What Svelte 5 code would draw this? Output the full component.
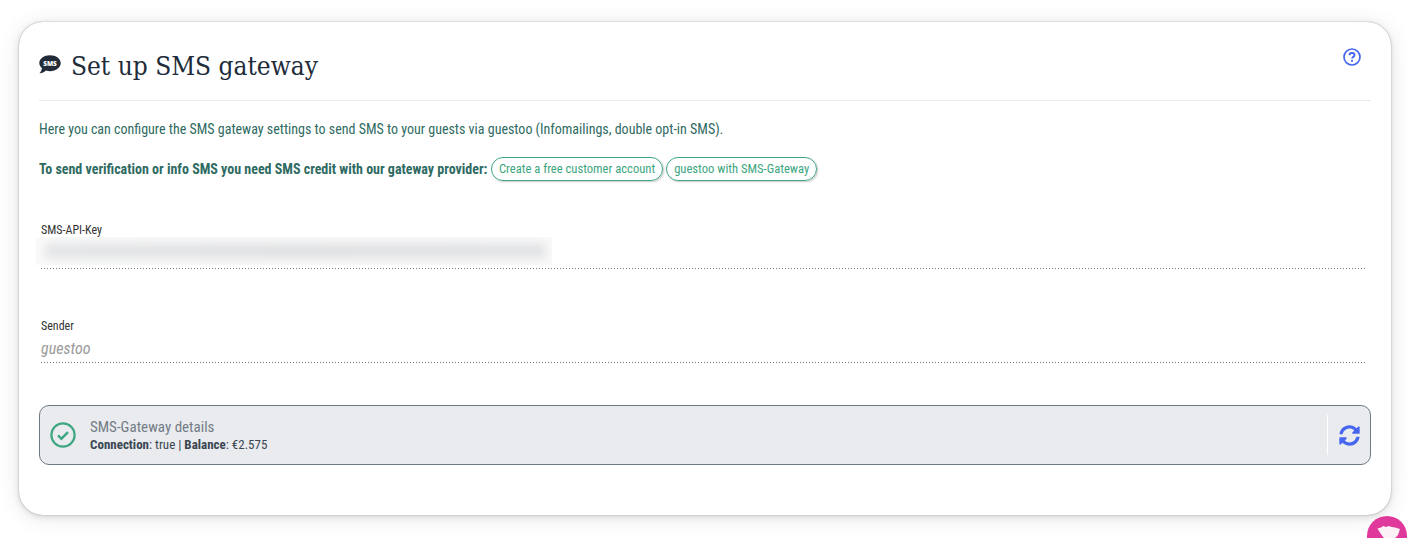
<script>
  const title = 'Set up SMS gateway';
</script>

<div class="page">
  <section class="card">
    <header class="head">
      <div class="title">
        <svg class="sms" viewBox="0 0 22 19" width="22" height="19" aria-hidden="true">
          <path d="M11 0.2C5 0.2 0.300 3.700 0.300 8.100c0 2 1 3.800 2.700 5.200C2.800 15 1.700 17 0.400 18.400c2.700-.1 5.100-1.300 6.600-2.800 1.200.4 2.600.6 4 .6 6 0 10.700-3.600 10.700-8.100S17 .2 11 .2z" fill="#212b3a"/>
          <text x="11" y="10.500" text-anchor="middle" class="smstext">SMS</text>
        </svg>
        <h1>{title}</h1>
      </div>
      <svg class="help" viewBox="0 0 18 18" width="18" height="18" aria-hidden="true">
        <circle cx="9" cy="9" r="8" fill="none" stroke="#4766f0" stroke-width="1.700"/>
        <path d="M6.500 7.200c0-1.400 1.100-2.200 2.500-2.200s2.500.8 2.500 2.100c0 1.900-2.400 1.700-2.400 3.500" fill="none" stroke="#4766f0" stroke-width="1.900"/>
        <rect x="8.100" y="11.900" width="1.900" height="1.900" fill="#4766f0"/>
      </svg>
    </header>

    <p class="intro">Here you can configure the SMS gateway settings to send SMS to your guests via guestoo (Infomailings, double opt-in SMS).</p>
    <p class="credit">
      <strong>To send verification or info SMS you need SMS credit with our gateway provider:</strong>
      <span class="pills">
        <a class="pill" href="#a">Create a free customer account</a>
        <a class="pill" href="#b">guestoo with SMS-Gateway</a>
      </span>
    </p>

    <div class="field first">
      <div class="label">SMS-API-Key</div>
      <div class="value"><div class="secret"><div class="smear"></div></div></div>
    </div>
    <div class="field second">
      <div class="label">Sender</div>
      <div class="value placeholder">guestoo</div>
    </div>

    <div class="status">
      <svg class="ok" viewBox="0 0 26 26" width="26" height="26" aria-hidden="true">
        <circle cx="13" cy="13" r="11.600" fill="none" stroke="#3ea680" stroke-width="2.200"/>
        <path d="M8 13.400l3.400 3.300 6.600-6.600" fill="none" stroke="#3ea680" stroke-width="2.400"/>
      </svg>
      <div class="info">
        <div class="info-title">SMS-Gateway details</div>
        <div class="info-line"><b>Connection</b>: true | <b>Balance</b>: €2.575</div>
      </div>
      <div class="refresh">
        <svg viewBox="0 0 512 512" width="21" height="21" aria-hidden="true">
          <path fill="#4766f0" d="M370.7 133.3C339.5 104 298.9 88 255.800 88c-77.500.1-144.300 53.200-162.800 126.900-1.300 5.400-6.100 9.200-11.700 9.200H24.100c-7.500 0-13.200-6.800-11.800-14.200C33.900 94.900 134.800 8 256 8c66.400 0 126.800 26.100 171.300 68.700L463 41C478.100 25.900 504 36.600 504 57.900V192c0 13.300-10.700 24-24 24H345.900c-21.400 0-32.100-25.900-17-41l41.800-41.700zM32 296h134.100c21.400 0 32.100 25.900 17 41l-41.800 41.800c31.300 29.300 71.800 45.300 114.900 45.200 77.400-.1 144.300-53.100 162.800-126.800 1.300-5.400 6.100-9.200 11.700-9.200h57.300c7.500 0 13.200 6.800 11.800 14.200C478.100 417.100 377.200 504 256 504c-66.400 0-126.800-26.100-171.300-68.700L49 471C33.900 486.100 8 475.400 8 454.100V320c0-13.300 10.700-24 24-24z"/>
        </svg>
      </div>
    </div>
  </section>

  <button class="fab" aria-label="Support">
    <svg viewBox="0 0 40 40" width="40" height="40" aria-hidden="true">
      <path d="M10.500 12.500l3.500-1 2-1.500 3 1 2.500-1 3.500 1 3 .5 5 1.500-2 6-5 5-4 4-4-4.500-4.500-6z" fill="#fdf1f8"/>
    </svg>
  </button>
</div>

<style>
  :global(body) {
    margin: 0;
    background: #fff;
    font-family: Roboto, "Liberation Sans", sans-serif;
    font-stretch: 75%;
  }
  .page {
    position: relative;
    height: 538px;
    overflow: hidden;
    padding: 22px 19px 0;
    box-sizing: border-box;
  }
  .card {
    height: 493px;
    box-sizing: border-box;
    background: #fff;
    border-radius: 24px;
    box-shadow: 0 0 1.500px rgba(0, 0, 0, .4), 0 2px 6px rgba(0, 0, 0, .1), 0 2px 22px rgba(0, 0, 0, .1);
    padding: 0 20px;
  }
  .head {
    display: flex;
    justify-content: space-between;
    height: 79px;
    border-bottom: 1px solid #e8eaee;
    box-sizing: border-box;
    padding-top: 25px;
  }
  .title {
    display: flex;
    align-items: flex-start;
    gap: 10px;
  }
  .sms { margin-top: 8px; }
  .smstext {
    font: 800 6.400px "Open Sans", sans-serif;
    fill: #fff;
  }
  h1 {
    margin: 0;
    font-family: "DejaVu Serif", serif;
    font-weight: 400;
    font-size: 26px;
    font-stretch: condensed;
    line-height: 38px;
    color: #212b3a;
  }
  .help { margin: 1px 0 0; position: relative; left: -10px; }
  p {
    margin: 0;
    font-size: 14px;
    color: #2f6b62;
  }
  .intro { margin-top: 20px; line-height: 16px; }
  .credit {
    margin-top: 20px;
    display: flex;
    align-items: center;
    gap: 3.500px;
    line-height: 24px;
  }
  .pills { display: flex; gap: 3px; }
  .pill {
    display: block;
    height: 24px;
    box-sizing: border-box;
    padding: 0 7px;
    border: 1px solid #3ea680;
    border-radius: 12px;
    font-size: 12.600px;
    line-height: 22px;
    color: #3ea680;
    text-decoration: none;
    box-shadow: 1px 1px 2px rgba(0, 0, 0, .22);
  }
  .field { padding: 0 5px 0 2px; }
  .first { margin-top: 42px; }
  .second { margin-top: 50px; }
  .label {
    font-size: 12px;
    line-height: 14px;
    color: #333;
  }
  .value {
    height: 32px;
    background: linear-gradient(to right, #777 1px, transparent 1px) left bottom / 3px 1px repeat-x;
  }
  .secret {
    width: 516px;
    height: 28px;
    margin: 0 0 0 -5px;
    overflow: hidden;
    background: #fafafa;
  }
  .smear {
    height: 16px;
    margin: 6px 6px 0 9px;
    background: linear-gradient(to right, #e4e5e7, #e0e1e3 50%, #e2e3e5);
    filter: blur(5px);
  }
  .placeholder {
    height: 30px;
    font-size: 16px;
    font-style: italic;
    line-height: 32px;
    color: #9a9a9a;
  }
  .status {
    margin-top: 42px;
    height: 60px;
    box-sizing: border-box;
    display: flex;
    align-items: center;
    background: #e9ebef;
    border: 1px solid #6d7a85;
    border-radius: 10px;
    padding-left: 10px;
  }
  .ok { flex: none; }
  .info { margin-left: 14px; flex: 1; }
  .info-title { font-size: 15px; line-height: 17px; color: #737c86; }
  .info-line { margin-top: 1px; font-size: 13px; line-height: 15px; color: #3b4650; }
  .refresh {
    height: 40px;
    width: 43px;
    box-sizing: border-box;
    border-left: 1px solid #fff;
    display: flex;
    align-items: center;
    justify-content: center;
  }
  .fab {
    position: absolute;
    left: 1367px;
    top: 516px;
    width: 40px;
    height: 40px;
    border: 0;
    padding: 0;
    border-radius: 50%;
    background: #e0399c;
  }
</style>
